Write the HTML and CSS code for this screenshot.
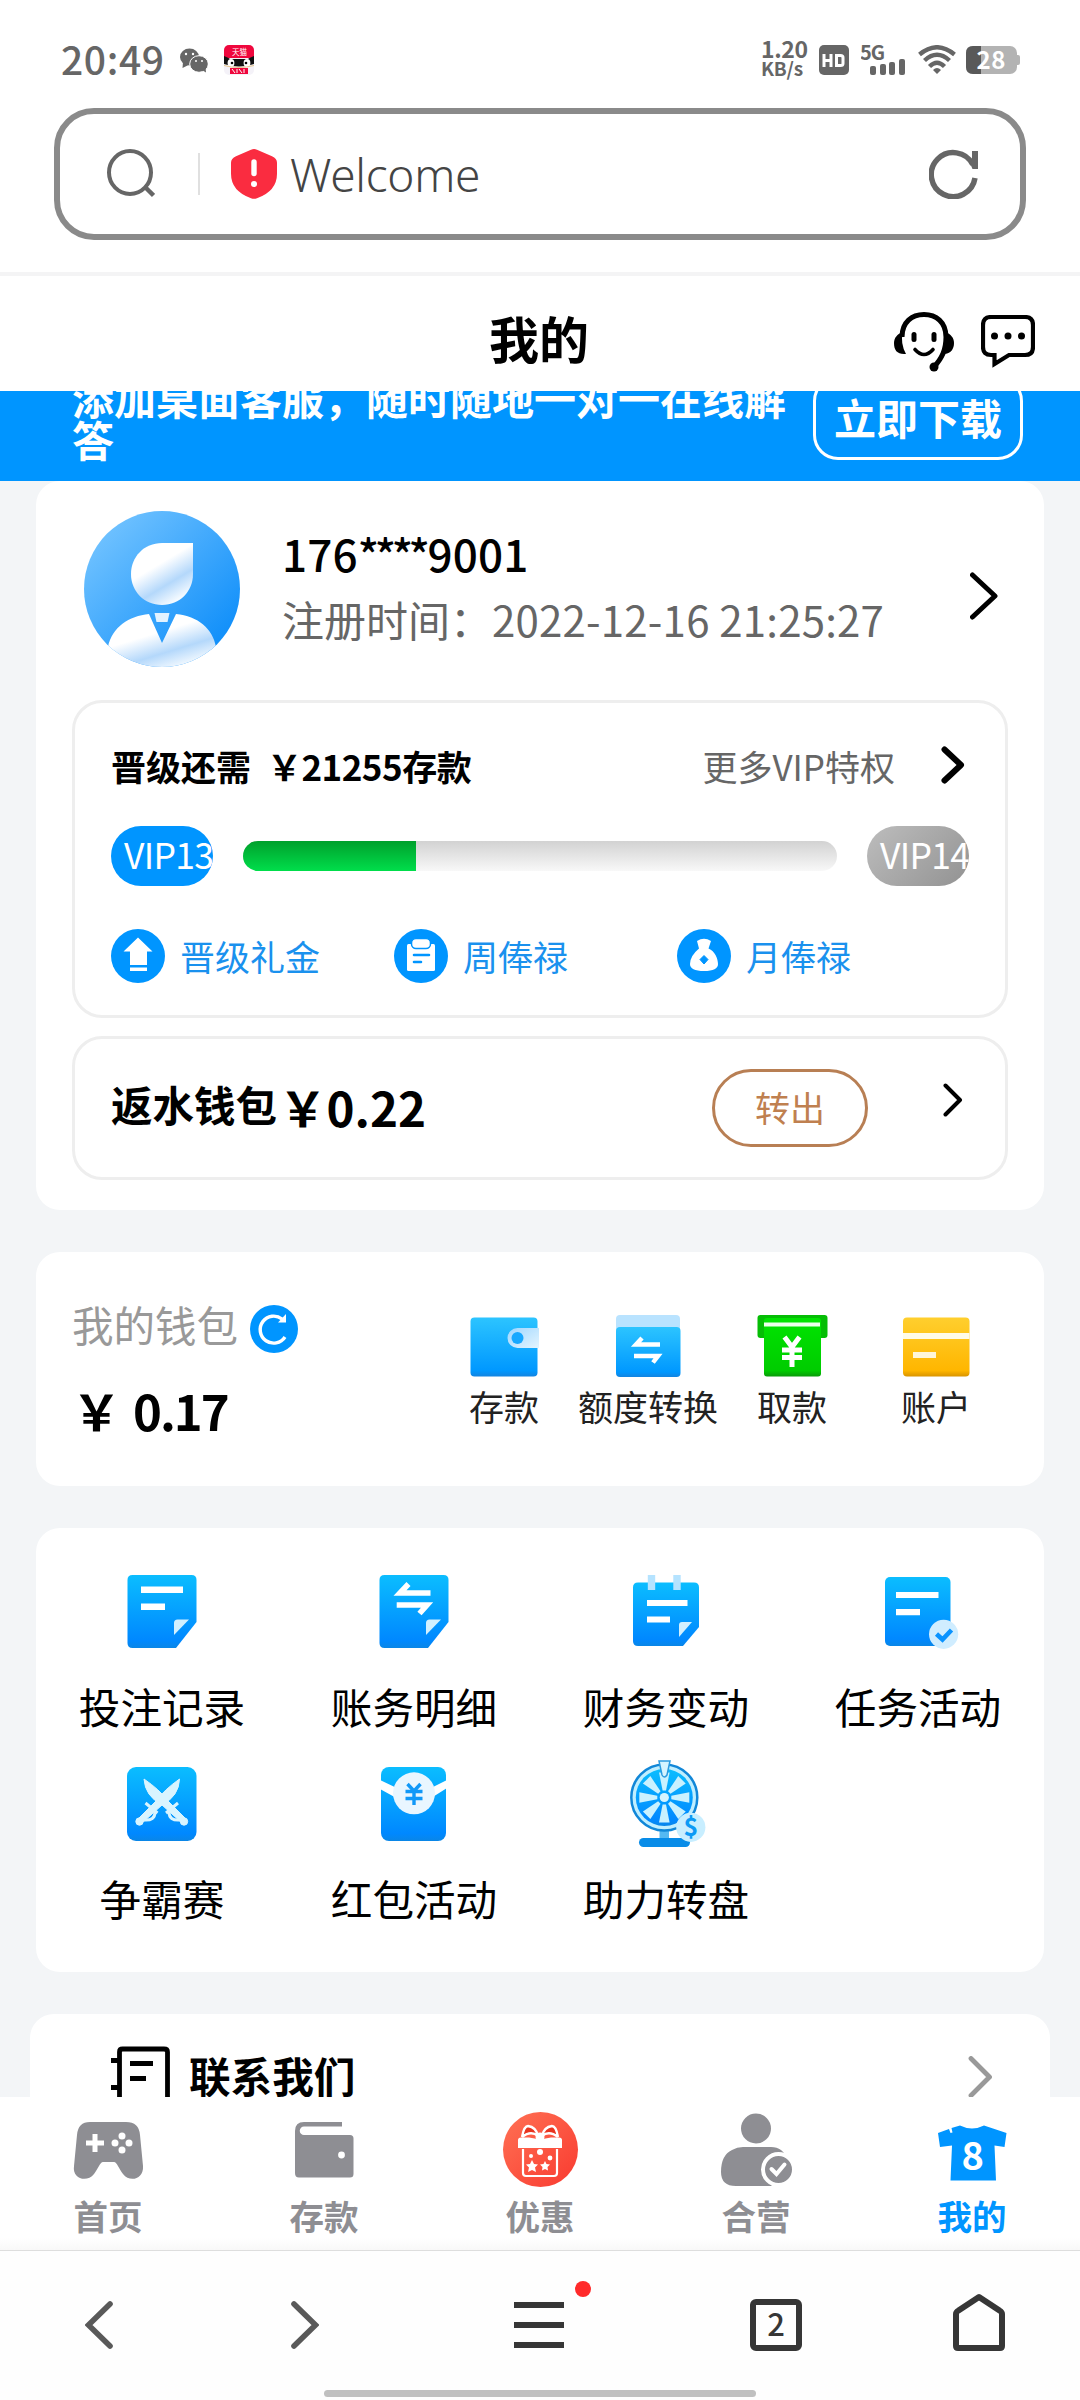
FILE: index.html
```html
<!DOCTYPE html>
<html lang="zh-CN">
<head>
<meta charset="utf-8">
<title>我的</title>
<link rel="stylesheet" href="styles.css">
</head>
<body>
<svg width="0" height="0" class="defs">
  <defs>
    <linearGradient id="blue" x1="0" y1="0" x2="0" y2="1"><stop offset="0" stop-color="#0bbdff"/><stop offset=".9" stop-color="#0088ff"/><stop offset="1" stop-color="#0a86e6"/></linearGradient>
    <linearGradient id="wallet" x1="0" y1="0" x2="0" y2="1"><stop offset="0" stop-color="#2cc4ff"/><stop offset=".9" stop-color="#0098ff"/><stop offset="1" stop-color="#1384e0"/></linearGradient>
    <linearGradient id="pale" x1="0" y1="0" x2="1" y2="1"><stop offset="0" stop-color="#9ed6ff"/><stop offset="1" stop-color="#e4f5ff"/></linearGradient>
    <linearGradient id="green" x1="0" y1="0" x2="0" y2="1"><stop offset="0" stop-color="#00e400"/><stop offset=".9" stop-color="#00cc00"/><stop offset="1" stop-color="#0a9a0a"/></linearGradient>
    <linearGradient id="gold" x1="0" y1="0" x2="0" y2="1"><stop offset="0" stop-color="#ffcf2e"/><stop offset=".9" stop-color="#ffb600"/><stop offset="1" stop-color="#d99400"/></linearGradient>
    <linearGradient id="coral" x1="0" y1="0" x2="1" y2="1"><stop offset="0" stop-color="#ff7154"/><stop offset="1" stop-color="#f93a30"/></linearGradient>
    <linearGradient id="sky" x1="0" y1="0" x2="1" y2="1"><stop offset=".1" stop-color="#72c3ff"/><stop offset=".85" stop-color="#1290fa"/></linearGradient>
    <linearGradient id="gloss" x1="0" y1="0" x2=".6" y2="1"><stop offset=".45" stop-color="#fff"/><stop offset=".75" stop-color="#b4d8fb"/><stop offset="1" stop-color="#f4faff"/></linearGradient>
  </defs>
</svg>

<header class="status">
  <span class="time">20:49</span>
  <svg class="wechat" width="28" height="25" viewBox="0 0 28 25"><g fill="#666"><ellipse cx="9.5" cy="9" rx="9.5" ry="8.5"/><path d="M3 14l-.5 6 6-3z"/><ellipse cx="19" cy="16" rx="9.3" ry="8.3" stroke="#fff"/><path d="M22 22l4 2.500-.5-5z"/></g><g fill="#fff"><circle cx="6" cy="6" r="1.200"/><circle cx="13" cy="6" r="1.200"/><circle cx="16" cy="13" r="1"/><circle cx="22" cy="13" r="1"/></g></svg>
  <svg class="tmall" width="30" height="30" viewBox="0 0 30 30"><rect width="30" height="30" rx="5" fill="#f4f2f8"/><path d="M0 13V5a5 5 0 0 1 5-5h20a5 5 0 0 1 5 5v8z" fill="#ef073d"/><path d="M0 11q5 2 6 3h18q1-1 6-3v8q-15 5-30 0z" fill="#111"/><ellipse cx="7" cy="18" rx="3.400" ry="4" fill="#fff"/><ellipse cx="23" cy="18" rx="3.400" ry="4" fill="#fff"/><circle cx="8" cy="18" r="1.300"/><circle cx="22" cy="18" r="1.300"/><path d="M0 20.500q15 4 30 0" stroke="#e8c990" fill="none"/><text x="8" y="10" font-size="7.500" fill="#fff">天猫</text><rect x="6" y="23" width="18" height="6" fill="#ef073d"/><path d="M8 24l3 4m2-4v4m2-4l3 4m2-4v4" stroke="#fff"/></svg>
  <span class="grow"></span>
  <span class="speed"><b>1.20</b><span>KB/s</span></span>
  <svg width="30" height="30" viewBox="0 0 30 30"><rect width="30" height="30" rx="5" fill="#666"/><path d="M5 9v13M12 9v13M5 15.500h7M17.500 10.500v10h4q2.500 0 2.500-2v-6q0-2-2.500-2z" fill="none" stroke="#fff" stroke-width="3"/></svg>
  <svg class="signal" width="45" height="32" viewBox="0 0 45 32"><text x="-1" y="16" font-size="20" font-weight="700" textLength="25" fill="#666">5G</text><g fill="#666"><rect x="9" y="22" width="6" height="9" rx="2"/><rect x="19" y="20" width="6" height="11" rx="2"/><rect x="28" y="18" width="6" height="13" rx="2"/><rect x="38" y="15" width="6" height="16" rx="2"/></g></svg>
  <svg class="wifi" width="38" height="30" viewBox="0 0 38 30"><g fill="none" stroke="#666" stroke-width="4.400"><path d="M1.500 9.500Q19-5 36.500 9.500"/><path d="M6.500 15.500Q19 4 31.500 15.500"/><path d="M11.500 21.500Q19 14 26.500 21.500"/></g><path d="M15 25q4-4 8 0l-4 4z" fill="#666"/></svg>
  <svg class="battery" width="54" height="28" viewBox="0 0 54 28"><rect width="51" height="28" rx="7" fill="#b3b3b3"/><path d="M50 9h2q2 0 2 2v6q0 2-2 2h-2z" fill="#b3b3b3"/><path d="M15 0H7Q0 0 0 7v14q0 7 7 7h8z" fill="#595959"/><text x="10.500" y="23" font-size="24" font-weight="700" textLength="29" fill="#fff">28</text></svg>
</header>

<div class="address">
  <svg class="search" width="48" height="50" viewBox="0 0 48 50"><path d="M38.500 38.500l8 8" stroke="#666" stroke-width="4.500"/><ellipse cx="23" cy="23.500" rx="21" ry="21.500" fill="none" stroke="#666" stroke-width="4"/></svg>
  <i class="split"></i>
  <svg class="shield" width="46" height="50" viewBox="0 0 46 50"><path d="M20 .7q3-1.300 6 0l15 6.500q5 2 5 6.500v11Q46 42 26 49.200q-3 1.200-6 0Q0 42 0 24.700v-11Q0 9.200 5 7.200z" fill="#fa2c40"/><path d="M23 13v11.500" stroke="#fff" stroke-width="5.400" stroke-linecap="round"/><circle cx="23" cy="35" r="3" fill="#fff"/></svg>
  <span class="url">Welcome</span>
  <svg width="50" height="50" viewBox="0 0 50 50"><path d="M43.800 15.500A22 22 0 1 0 46 29" fill="none" stroke="#666" stroke-width="5.500"/><path d="M43 2h6v18h-5.500l-3-7 2.500-3z" fill="#666"/></svg>
</div>

<div class="titlebar">
  <h1>我的</h1>
  <div class="tools">
    <svg width="60" height="60" viewBox="0 0 60 60"><path d="M8 25C8 10 18 2.500 30 2.500S52 10 52 25C52 38 48 46 40 55" fill="none" stroke="#000" stroke-width="5"/><path d="M9 20C3 22 0 26 0 31c0 7 3 11 10 11h2Q6 31 9 20zM51 20c6 2 9 6 9 11 0 6-3 10-9 11q3-11 0-22z"/><circle cx="40" cy="55" r="4.500"/><rect x="17.500" y="20" width="5" height="10" rx="2.500"/><rect x="37.500" y="20" width="5" height="10" rx="2.500"/><path d="M21 37.500q9 10 18 0" fill="none" stroke="#000" stroke-width="3.600" stroke-linecap="round"/></svg>
    <svg class="chat" width="54" height="54" viewBox="0 0 54 54"><path d="M10 2h34q8 0 8 8v22q0 8-8 8H28L13.500 49V40H10q-8 0-8-8V10q0-8 8-8z" fill="none" stroke="#000" stroke-width="4.200"/><circle cx="13.500" cy="21" r="3.500"/><circle cx="27" cy="21" r="3.500"/><circle cx="40.500" cy="21" r="3.500"/></svg>
  </div>
</div>

<main class="page">
  <section class="promo">
    <p>添加桌面客服，随时随地一对一在线解答</p>
    <a class="download">立即下载</a>
  </section>

  <section class="card profile">
    <div class="user">
      <svg width="156" height="156" viewBox="0 0 156 156"><clipPath id="round"><circle cx="78" cy="78" r="78"/></clipPath><g clip-path="url(#round)"><path d="M0 0h156v156H0z" fill="url(#sky)"/><path d="M109 32H78C60 32 47 46 47 63s13 31 31 31 31-14 31-31z" fill="url(#gloss)"/><path d="M24 136c4-20 21-31 41-33l13 29 14-29c22 2 37 15 40 33l-20 22H44z" fill="url(#gloss)"/><path d="M70.500 102h15l-2 9h-11z" fill="#e3f2ff"/></g></svg>
      <div class="who"><strong>176<span class="mask">****</span>9001</strong><span>注册时间：<span class="date">2022-12-16 21:25:27</span></span></div>
      <svg width="28" height="48" viewBox="0 0 28 48"><path d="M2.500 3L25 24 2.500 45" fill="none" stroke="#000" stroke-width="5" stroke-linecap="round" stroke-linejoin="round"/></svg>
    </div>

    <div class="panel vip">
      <div class="line">
        <strong>晋级还需&nbsp; <span class="need">￥21255存款</span></strong>
        <span class="more">更多VIP特权</span>
        <svg width="24" height="38" viewBox="0 0 24 38"><path d="M3.500 3.500L20 19 3.500 34.500" fill="none" stroke="#000" stroke-width="6" stroke-linecap="round" stroke-linejoin="round"/></svg>
      </div>
      <div class="level"><span class="pill now">VIP13</span><div class="track"><i style="width:29.1%"></i></div><span class="pill next">VIP14</span></div>
      <div class="perks">
        <span><svg width="54" height="54" viewBox="0 0 54 54"><circle cx="27" cy="27" r="27" fill="#0095ff"/><path d="M27 8.500L41.500 22.500H36V36H19V22.500h-6.500zM19 38.500h17v3.500H19z" fill="#fff"/></svg>晋级礼金</span>
        <span><svg width="54" height="54" viewBox="0 0 54 54"><circle cx="27" cy="27" r="27" fill="#0095ff"/><rect x="13" y="15" width="28" height="27" rx="1.500" fill="#fff"/><rect x="17.500" y="9.500" width="19" height="10" rx="4.500" fill="#fff" stroke="#0095ff" stroke-width="1.500"/><path d="M20 26h15M20 33h7" stroke="#0095ff" stroke-width="2.600" stroke-linecap="round"/></svg>周俸禄</span>
        <span><svg width="54" height="54" viewBox="0 0 54 54"><circle cx="27" cy="27" r="27" fill="#0095ff"/><path d="M20 12q7-4.500 14 0l-2.500 7.500C38 22 41 30 41 35q0 7-14 7t-14-7q0-8 9-15.500z" fill="#fff"/><path d="M27 26.500l4 4-4 4.500-4-4.500z" fill="#0095ff" stroke="#0095ff" stroke-linejoin="round"/></svg>月俸禄</span>
      </div>
    </div>

    <div class="panel rebate">
      <strong>返水钱包</strong><b>￥0.22</b>
      <a class="out">转出</a>
      <svg width="20" height="34" viewBox="0 0 20 34"><path d="M2.500 2.500L17 17 2.500 31.500" fill="none" stroke="#000" stroke-width="4" stroke-linecap="round" stroke-linejoin="round"/></svg>
    </div>
  </section>

  <section class="card money">
    <div class="balance">
      <div class="cap">我的钱包<svg width="48" height="48" viewBox="0 0 48 48"><circle cx="24" cy="24" r="24" fill="#0095ff"/><path d="M35 32a13.500 13.500 0 1 1-3-18" fill="none" stroke="#fff" stroke-width="3.400"/><path d="M28 17.500h8V9" fill="#fff"/></svg></div>
      <div class="sum">￥<span>0.17</span></div>
    </div>
    <nav class="quick">
      <a><svg width="72" height="62" viewBox="0 0 72 62"><rect x="2.500" y="2.500" width="67" height="59" rx="4" fill="url(#wallet)"/><path d="M71 13H49.500a10 10 0 0 0 0 20H71z" fill="url(#pale)"/><circle cx="49.500" cy="23" r="6" fill="#17a8ff"/></svg>存款</a>
      <a><svg width="72" height="62" viewBox="0 0 72 62"><path d="M4 18V4q0-4 4-4h56q4 0 4 4v14z" fill="#b9e3ff"/><rect x="4" y="12" width="64.500" height="50" rx="4" fill="url(#wallet)"/><path d="M48 29.500H24l6-6.500M22 41h24l-5 6.500" fill="none" stroke="#fff" stroke-width="4.500"/></svg>额度转换</a>
      <a><svg width="72" height="62" viewBox="0 0 72 62"><rect x="1.500" width="70" height="23" rx="3" fill="#05bd05"/><rect x="8" y="3" width="57" height="58.500" rx="3" fill="url(#green)"/><path d="M8 9.500h56" stroke="#eaffea" stroke-width="4"/><path d="M28.500 22L36 32l7.500-10M36 32v20M26 35h20M26 42.500h20" fill="none" stroke="#fff" stroke-width="5"/></svg>取款</a>
      <a><svg width="72" height="62" viewBox="0 0 72 62"><rect x="3" y="2.500" width="66.500" height="59" rx="4" fill="url(#gold)"/><path d="M3 21h66.500" stroke="#fffbe8" stroke-width="6"/><path d="M13 40h23" stroke="#fff6d8" stroke-width="6"/></svg>账户</a>
    </nav>
  </section>

  <section class="card grid">
    <a><svg width="96" height="90" viewBox="0 0 96 90"><path d="M18.500 8h59q5 0 5 5v42L62 81H18.500q-5 0-5-5V13q0-5 5-5z" fill="url(#blue)"/><path d="M27 22.700h42M27 39.700h24" stroke="#fff" stroke-width="6.400"/><path d="M60 68V56q0-3.500 3.500-3.500H75z" fill="#d2f0ff"/></svg>投注记录</a>
    <a><svg width="96" height="90" viewBox="0 0 96 90"><path d="M18.500 8h59q5 0 5 5v42L62 81H18.500q-5 0-5-5V13q0-5 5-5z" fill="url(#blue)"/><path d="M64.500 26H34l8.500-9M30.700 38H61L53.500 46.500" fill="none" stroke="#fff" stroke-width="5.600"/><path d="M60 68V56q0-3.500 3.500-3.500H75z" fill="#d2f0ff"/></svg>账务明细</a>
    <a><svg width="96" height="90" viewBox="0 0 96 90"><path d="M20 15.500h56q5 0 5 5V60L65 79H20q-5 0-5-5V20.500q0-5 5-5z" fill="url(#blue)"/><path d="M33.500 8v15M59 8v15" stroke="#b5e3ff" stroke-width="7.400"/><path d="M29 36h40.500M29 52.500h23" stroke="#fff" stroke-width="6"/><path d="M61 70V58q0-3 3-3h10z" fill="#d2f0ff"/></svg>财务变动</a>
    <a><svg width="96" height="90" viewBox="0 0 96 90"><rect x="15" y="10" width="65.500" height="69" rx="5" fill="url(#blue)"/><path d="M26 28h42.500M26 45.200h24" stroke="#fff" stroke-width="6.200"/><circle cx="73.600" cy="67.300" r="14.600" fill="#d0edff"/><path d="M66.500 67l6 5.500 9-9.500" fill="none" stroke="#0a93ff" stroke-width="4.600"/></svg>任务活动</a>
    <a><svg width="96" height="90" viewBox="0 0 96 90"><rect x="13" y="8" width="69.500" height="74" rx="9" fill="url(#blue)"/><g fill="#d9f4ff" stroke="#d9f4ff"><path d="M30 20Q46 31 53 41L72 60l-4 4-20-18Q31 37 30 20z"/><path d="M65.500 20Q50 31 43 41L24 60l4 4 20-18Q65 37 65.500 20z"/><circle cx="25.500" cy="62.500" r="3.700"/><circle cx="70" cy="62.500" r="3.700"/><path d="M31.500 44l12 10M64 44L52 54M41 53q0 9-11 8M55 53q0 9 11 8" fill="none" stroke-width="3"/></g></svg>争霸赛</a>
    <a><svg width="96" height="90" viewBox="0 0 96 90"><rect x="15" y="8" width="65" height="74" rx="8" fill="url(#blue)"/><path d="M14 21l21 10h26l20-10v8L62 41H34L14 30z" fill="#fff"/><circle cx="48" cy="34.300" r="21" fill="#e9f6ff"/><path d="M41.500 25l6.500 7 6.500-7M48 32v14M39.500 32.500h17M39.500 39.500h17" fill="none" stroke="#1098f8" stroke-width="3.400"/></svg>红包活动</a>
    <a><svg width="96" height="90" viewBox="0 0 96 90"><path d="M41.500 70h9.500v9h-9.500z" fill="#55b9f2"/><rect x="21" y="79" width="51" height="9" rx="4.500" fill="#088ce8"/><circle cx="46.300" cy="38.500" r="33" fill="#bfeeff" stroke="#1187d8" stroke-width="2.500"/><circle cx="46.300" cy="38.500" r="28.500" fill="url(#blue)"/><g fill="#c9f1ff"><path d="M44.600 31.500l-3.600-18h10.600l-3.600 18z"/><path d="M44.600 31.500l-3.600-18h10.600l-3.600 18z" transform="rotate(45 46.300 38.500)"/><path d="M44.600 31.500l-3.600-18h10.600l-3.600 18z" transform="rotate(90 46.300 38.500)"/><path d="M44.600 31.500l-3.600-18h10.600l-3.600 18z" transform="rotate(135 46.300 38.500)"/><path d="M44.600 31.500l-3.600-18h10.600l-3.600 18z" transform="rotate(180 46.300 38.500)"/><path d="M44.600 31.500l-3.600-18h10.600l-3.600 18z" transform="rotate(225 46.300 38.500)"/><path d="M44.600 31.500l-3.600-18h10.600l-3.600 18z" transform="rotate(270 46.300 38.500)"/><path d="M44.600 31.500l-3.600-18h10.600l-3.600 18z" transform="rotate(315 46.300 38.500)"/></g><circle cx="46.300" cy="38.500" r="4.600" fill="#d5f4ff"/><path d="M41 2h11l-3 14q-2.700 4-5 0z" fill="#d5f4ff" stroke="#2c9be0" stroke-width="1.500"/><circle cx="72.800" cy="68.300" r="14.600" fill="#c8eeff"/><text x="72.800" y="77" text-anchor="middle" font-size="25" font-weight="700" fill="#0c9af5">$</text></svg>助力转盘</a>
  </section>

  <section class="card contact">
    <svg width="60" height="60" viewBox="0 0 60 60"><path d="M8.500 60V6q0-3 3-3H53q3.500 0 3.500 3v54M0 14.500h8M0 41.500h8M19 17.500h23M19 32.500h16" fill="none" stroke="#000" stroke-width="4.800"/></svg>
    <strong>联系我们</strong>
    <svg width="24" height="42" viewBox="0 0 24 42"><path d="M3 2.500L21.500 21 3 39.500" fill="none" stroke="#999" stroke-width="4.800" stroke-linecap="round" stroke-linejoin="round"/></svg>
  </section>
</main>

<nav class="tabs">
  <a><svg width="84" height="84" viewBox="0 0 84 84"><path d="M24 15h36q13 0 14 13l3 31c1 13-13 17-20 8-4-5-6-12-9-12H37c-3 0-5 7-9 12-7 9-22 5-20-8l3-31q1-13 13-13z" fill="#8e8e93"/><path d="M29 27v18M20 36h18" stroke="#fff" stroke-width="5"/><g fill="#fff"><circle cx="56" cy="29" r="3.500"/><circle cx="49" cy="36" r="3.500"/><circle cx="63" cy="36" r="3.500"/><circle cx="56" cy="43" r="3.500"/></g></svg>首页</a>
  <a><svg width="84" height="84" viewBox="0 0 84 84"><path d="M13 66V24q0-9 9-9h38v4.500H22a4 4 0 0 0 0 8.500h46q3.500 0 3.500 3.500V67q0 3.500-3.500 3.500H17q-4 0-4-4.500z" fill="#8e8e93"/><circle cx="59.500" cy="48" r="3.400" fill="#fff"/></svg>存款</a>
  <a><svg width="84" height="84" viewBox="0 0 84 84"><circle cx="42.500" cy="42.500" r="37.500" fill="url(#coral)"/><path d="M24 30q2-11 6-11 8 1 10 10-7-6-16 1M60 30q-2-11-6-11-8 1-10 10 7-6 16 1" fill="#e8341f" stroke="#fff" stroke-width="2.400"/><path d="M20 33q0-2.500 3-2.500h8l11 2 11-2h8q3 0 3 2.500v8H20z" fill="#fff"/><circle cx="42" cy="30" r="4.500" fill="#fff"/><path d="M25 42v24q0 3 3 3h28q3 0 3-3V42" fill="none" stroke="#fff" stroke-width="2.200"/><g fill="#fff"><path d="M34 53l2 4 4 .5-3 3 1 4.500-4-2-4 2 1-4.500-3-3 4-.5zM47 54l1.500 3 3.500.5-2.500 2.500.5 3.500-3-1.500-3 1.500.5-3.500-2.500-2.500 3.500-.5z"/><circle cx="42" cy="45" r="3"/><circle cx="33" cy="49" r="2"/><circle cx="52" cy="51" r="2.400"/></g></svg>优惠</a>
  <a><svg width="84" height="84" viewBox="0 0 84 84"><g fill="#8e8e93"><circle cx="42" cy="21.500" r="15"/><path d="M29 40h28q12 0 16 12l-5 27H22Q7 79 7 65q0-17 11-22 5-3 11-3z"/></g><path d="M50 79h30V48H68z" fill="#fff"/><path d="M46 79h12L50 68z" fill="#8e8e93"/><circle cx="64.500" cy="62.500" r="15.500" fill="#8e8e93" stroke="#fff" stroke-width="4"/><path d="M57.500 62l5 5 8-9.500" fill="none" stroke="#fff" stroke-width="4" stroke-linecap="round"/></svg>合营</a>
  <a class="on"><svg width="84" height="84" viewBox="0 0 84 84"><path d="M8 26l11-4 1.500 4 2-.5L21.500 21 30 18.500q12 6 24 0L76.500 26l-2 14-10-1.500L66 73.500H20.500L22 38.500 10 40z" fill="#0095ff"/><text x="42.700" y="63" text-anchor="middle" font-size="38" font-weight="700" fill="#fff">8</text></svg>我的</a>
</nav>

<footer class="browser">
  <div class="keys">
    <svg width="28" height="48" viewBox="0 0 28 48"><path d="M25 3L3.500 24 25 45" fill="none" stroke="#595959" stroke-width="5.600" stroke-linecap="round"/></svg>
    <svg width="28" height="48" viewBox="0 0 28 48"><path d="M3 3l21.500 21L3 45" fill="none" stroke="#595959" stroke-width="5.600" stroke-linecap="round"/></svg>
    <span class="menu"><i></i><i></i><i></i></span>
    <span class="count">2</span>
    <svg class="home" width="52" height="58" viewBox="0 0 52 58"><path d="M5.500 17.500L26 4l20.500 13.500Q49 19 49 21v32q0 2-2 2H5q-2 0-2-2V21q0-2 2.500-3.500z" fill="none" stroke="#363636" stroke-width="6" stroke-linejoin="round"/></svg>
  </div>
  <i class="handle"></i>
</footer>
</body>
</html>
```
FILE: styles.css
```css
* { box-sizing: border-box; }
body {
  margin: 0;
  width: 1080px;
  height: 2400px;
  overflow: hidden;
  display: flex;
  flex-direction: column;
  background: #fff;
  color: #000;
  font-family: "Noto Sans CJK SC", sans-serif;
}
svg { display: block; flex: none; }
i { display: block; }
h1, p { margin: 0; }
.defs { position: absolute; }
.grow { flex: 1; }

/* phone status row */
.status {
  height: 108px;
  flex: none;
  display: flex;
  align-items: center;
  padding: 12px 60px 0 61px;
  color: #666;
}
.time { font-size: 39px; font-weight: 500; line-height: 40px; letter-spacing: 0.6px; margin-top: -4px; }
.wechat { margin-left: 15px; }
.tmall { margin-left: 16px; }
.speed { display: flex; flex-direction: column; width: 45px; margin-right: 13px; font-size: 19px; line-height: 20px; font-weight: 500; margin-top: -4px; }
.speed b { font-weight: 700; font-size: 23px; letter-spacing: -0.4px; }
.speed span { font-weight: 700; letter-spacing: -0.2px; }
.signal { margin-left: 12px; }
.wifi { margin-left: 12px; }
.battery { margin-left: 10px; }

/* browser address bar */
.address {
  height: 132px;
  flex: none;
  margin: 0 54px 32px;
  border: 6px solid #8a8a8a;
  border-radius: 40px;
  display: flex;
  align-items: center;
  padding: 0 41px 0 47px;
}
.split { width: 2px; height: 42px; background: #e0e0e0; margin: 0 31px 0 43px; }
.url { flex: 1; margin-left: 13px; font: 350 46px/60px "Noto Sans", sans-serif; letter-spacing: -0.3px; color: #444; }

.titlebar {
  height: 119px;
  flex: none;
  border-top: 4px solid #f4f4f5;
  display: grid;
  grid-template-columns: 1fr auto 1fr;
  align-items: center;
}
.titlebar h1 { grid-column: 2; font-size: 50px; line-height: 60px; font-weight: 700; margin: 7px 2px 0 0; }
.tools { display: flex; justify-content: flex-end; gap: 27px; padding: 16px 45px 0 0; }
.chat { margin-top: 3px; }

.page {
  height: 1706px;
  flex: none;
  overflow: hidden;
  background: #f3f5f7;
}
.promo {
  height: 90px;
  background: #0095ff;
  color: #fff;
  display: flex;
  justify-content: space-between;
  align-items: flex-end;
  padding: 0 57px 21px 72px;
  font-size: 42px;
  font-weight: 700;
  overflow: hidden;
}
.promo p { width: 715px; line-height: 42px; }
.download { border: 3px solid #fff; border-radius: 25px; width: 210px; height: 84px; line-height: 75px; text-align: center; flex: none; }

.card { margin: 0 36px 42px; border-radius: 24px; background: #fff; }
.profile { height: 729px; padding: 30px 36px; }
.user { display: flex; align-items: center; height: 156px; padding: 0 10px 0 12px; }
.user > svg:last-child { margin-top: 14px; }
.who { flex: 1; display: flex; flex-direction: column; margin: -6px 0 0 42px; }
.who strong { font-size: 44px; font-weight: 500; line-height: 66px; letter-spacing: 0.2px; }
.mask { letter-spacing: -4.4px; margin-right: 2px; }
.who > span { font-size: 42px; line-height: 66px; color: #666; white-space: nowrap; }
.date { letter-spacing: 0.2px; }

.panel { border: 3px solid #eee; border-radius: 30px; }
.vip { height: 318px; margin: 33px 0 18px; padding: 34px 36px; }
.line { display: flex; align-items: center; height: 56px; font-size: 35px; }
.line strong { flex: 1; font-weight: 700; }
.need { letter-spacing: -0.5px; }
.more { color: #666; margin-right: 46px; }
.line svg { margin-right: 4px; }
.level { display: flex; align-items: center; height: 60px; margin-top: 33px; }
.pill { width: 102px; height: 60px; border-radius: 30px; padding-left: 13px; font-size: 35.5px; line-height: 55px; letter-spacing: -0.7px; color: #fff; white-space: nowrap; overflow: hidden; flex: none; }
.now { background: #0095ff; }
.next { background: linear-gradient(135deg, #bdbdbd, #929292); }
.track { flex: 1; height: 30px; margin: 0 30px; border-radius: 15px; overflow: hidden; background: linear-gradient(#d2d2d2, #f8f8f8); }
.track i { height: 100%; background: linear-gradient(#00a02c, #00de4b); }
.perks { display: grid; grid-template-columns: repeat(3, 283px); margin-top: 43px; }
.perks span { display: flex; align-items: center; gap: 15px; font-size: 35px; line-height: 52px; color: #1a91ee; white-space: nowrap; }

.rebate { height: 144px; display: flex; align-items: center; padding: 0 42px 0 36px; }
.rebate strong { font-size: 41.5px; font-weight: 700; margin: -8px 2px 0 0; }
.rebate b { flex: 1; font-size: 47.5px; margin-top: -4px; }
.out { width: 156px; height: 78px; border: 3px solid #b87f54; border-radius: 39px; color: #bf8050; font-size: 35px; line-height: 69px; text-align: center; margin-right: 75px; }
.rebate svg { margin-bottom: 16px; }

.money { height: 234px; display: flex; padding: 42px 36px 0 36px; }
.balance { flex: 1; }
.cap { display: flex; align-items: center; gap: 12px; height: 60px; font-size: 41.5px; color: #999; line-height: 52px; }
.cap svg { margin-top: 9px; }
.sum { font-size: 49px; font-weight: 700; line-height: 60px; margin-top: 26px; }
.sum span { margin-left: 12px; letter-spacing: -2px; }
.quick { display: grid; grid-template-columns: repeat(4, 144px); padding-top: 21px; }
.quick a { display: flex; flex-direction: column; align-items: center; font-size: 35px; line-height: 56px; gap: 1px; color: #222; white-space: nowrap; }

.grid { height: 444px; display: grid; grid-template-columns: repeat(4, 252px); grid-auto-rows: 192px; padding-top: 39px; }
.grid a { display: flex; flex-direction: column; align-items: center; font-size: 41.6px; line-height: 60px; gap: 19px; }

.contact { height: 130px; margin: 0 30px; display: flex; align-items: center; padding: 0 58px 0 81px; }
.contact svg { align-self: flex-start; margin-top: 32px; }
.contact svg:last-child { margin-top: 42px; }
.contact strong { flex: 1; font-size: 41.6px; margin: -9px 0 0 18px; }

/* site tab bar */
.tabs {
  height: 153px;
  flex: none;
  display: grid;
  grid-template-columns: repeat(5, 216px);
  padding-top: 10px;
  background: linear-gradient(#fff 92%, #f8f8f8);
}
.tabs a { display: flex; flex-direction: column; align-items: center; font-size: 34.5px; line-height: 49px; font-weight: 700; color: #8e8e93; }
.tabs .on { color: #0095ff; }

/* browser toolbar */
.browser { flex: 1; border-top: 1px solid #dedede; background: #fefefe; }
.keys { display: grid; grid-template-columns: 198px 214px 254px 220px 186px; justify-items: center; align-items: center; height: 139px; padding-top: 9px; }
.menu { position: relative; display: flex; flex-direction: column; gap: 14px; width: 50px; }
.menu i { height: 6px; background: #363636; }
.menu::after { content: ""; position: absolute; left: 61px; top: -21px; width: 16px; height: 16px; border-radius: 50%; background: #ff2a2a; }
.count { width: 52px; height: 52px; border: 6px solid #363636; border-radius: 6px; font-size: 31px; line-height: 36px; font-weight: 500; text-align: center; color: #363636; }
.home { margin-bottom: 6px; }
.handle { width: 432px; height: 7px; border-radius: 4px; background: #c0c0c0; margin: 0 auto; }
```
